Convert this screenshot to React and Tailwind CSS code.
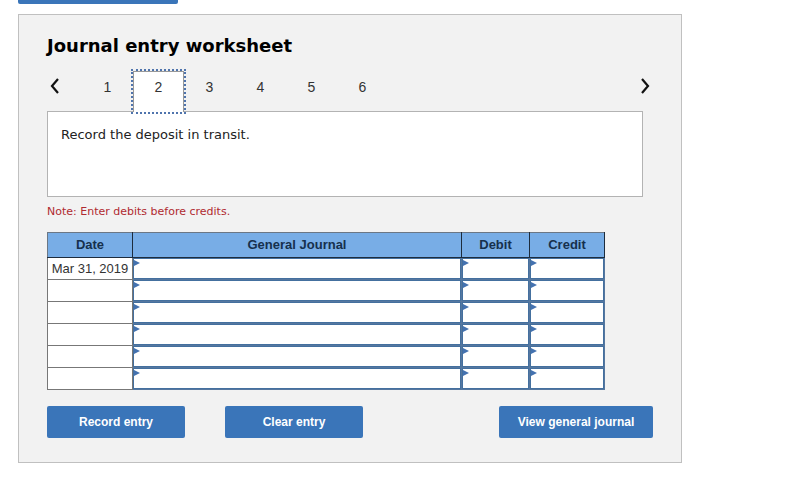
import React, { useState } from "react";

const pages = [1, 2, 3, 4, 5, 6];

const rows = ["Mar 31, 2019", "", "", "", "", ""];

const columns = ["General Journal", "Debit", "Credit"];

const Chevron = ({ points }) => (
  <svg width="10" height="16" viewBox="0 0 10 16" fill="none" stroke="#111" strokeWidth="2.2" aria-hidden="true">
    <polyline points={points} />
  </svg>
);

const ActionButton = ({ children, className }) => (
  <button
    type="button"
    className={`h-8 rounded-xs bg-[#3a75b9] text-xs font-bold text-white ${className}`}
  >
    {children}
  </button>
);

const Pager = ({ current, onChange }) => (
  <nav className="relative z-10 mt-[13px] -mb-px flex h-[41px] items-center">
    <button
      type="button"
      aria-label="Previous entry"
      className="flex h-full w-[35px] items-center pl-[3px] pb-3"
      onClick={() => onChange(Math.max(1, current - 1))}
    >
      <Chevron points="8,1 2,8 8,15" />
    </button>
    {pages.map((page) => (
      <button
        key={page}
        type="button"
        onClick={() => onChange(page)}
        className={
          page === current
            ? "h-full w-[51px] border border-b-0 border-[#999] bg-white pb-[10px] text-sm text-[#333] outline-2 outline-dotted outline-[#4f74ad]"
            : "h-full w-[51px] pb-[10px] text-sm text-[#333]"
        }
      >
        {page}
      </button>
    ))}
    <button
      type="button"
      aria-label="Next entry"
      className="ml-auto flex h-full w-[35px] items-center justify-end pr-[3px] pb-3"
      onClick={() => onChange(Math.min(pages.length, current + 1))}
    >
      <Chevron points="2,1 8,8 2,15" />
    </button>
  </nav>
);

const EntryCell = ({ label }) => (
  <td className="relative border border-[#56779f] p-0">
    <input
      type="text"
      aria-label={label}
      className="block h-[21px] w-full border border-[#44709f] bg-white px-2 text-[13px] outline-none"
    />
    <svg className="absolute top-[2px] left-px" width="6" height="6" viewBox="0 0 6 6" aria-hidden="true">
      <path d="M0 0L6 3L0 6Z" fill="#4472b0" />
    </svg>
  </td>
);

const JournalTable = () => (
  <div className="mt-3 mr-12">
    <table className="w-full table-fixed border-collapse bg-white text-[13px] text-[#333]">
      <colgroup>
        <col className="w-[85px]" />
        <col />
        <col className="w-[68px]" />
        <col className="w-[75px]" />
      </colgroup>
      <thead>
        <tr className="h-[25px] bg-[#78ade6] text-[#16304d]">
          <th className="border border-[#1d2c3d] border-t-[#6b7785] border-l-[#6b7785] p-0 font-bold">Date</th>
          {columns.map((column) => (
            <th key={column} className="border border-[#1d2c3d] border-t-[#6b7785] p-0 font-bold">
              {column}
            </th>
          ))}
        </tr>
      </thead>
      <tbody>
        {rows.map((date, i) => (
          <tr key={i} className="h-[22px]">
            <td className="border border-[#777] p-0 text-center whitespace-nowrap">{date}</td>
            {columns.map((column) => (
              <EntryCell key={column} label={`${column}, row ${i + 1}`} />
            ))}
          </tr>
        ))}
      </tbody>
    </table>
  </div>
);

const App = () => {
  const [current, setCurrent] = useState(2);

  return (
    <div className="bg-white font-['Liberation_Sans',Arial,sans-serif]">
      <div className="ml-[18px] h-1 w-40 rounded-b-xs bg-[#3a75b9]" />
      <main className="mt-[10px] mr-[109px] mb-[22px] ml-[18px] border border-[#c0c0c0] bg-[#f2f2f2] px-7 pt-[19px] pb-6">
        <h1 className="font-['DejaVu_Sans',Verdana,sans-serif] text-lg leading-6 font-bold text-black">
          Journal entry worksheet
        </h1>
        <Pager current={current} onChange={setCurrent} />
        <div className="mr-[10px] min-h-[86px] border border-[#b3b3b3] bg-white px-[13px] py-[13px] font-['DejaVu_Sans',Verdana,sans-serif] text-[13px] leading-5 text-[#222]">
          Record the deposit in transit.
        </div>
        <p className="mt-[7px] font-['DejaVu_Sans',Verdana,sans-serif] text-[11px] leading-4 text-[#b02a30]">
          Note: Enter debits before credits.
        </p>
        <JournalTable />
        <div className="mt-4 flex gap-10">
          <ActionButton className="w-[138px]">Record entry</ActionButton>
          <ActionButton className="w-[138px]">Clear entry</ActionButton>
          <ActionButton className="ml-auto w-[154px]">View general journal</ActionButton>
        </div>
      </main>
    </div>
  );
};

export default App;
